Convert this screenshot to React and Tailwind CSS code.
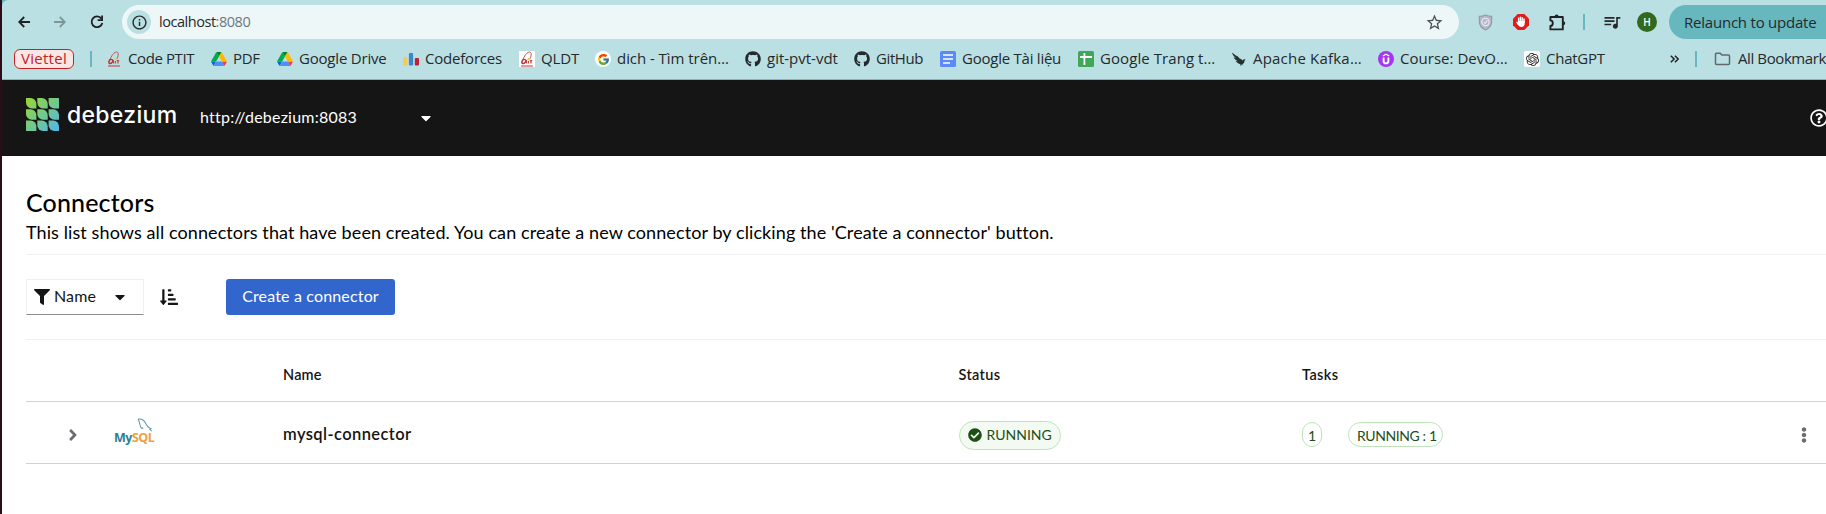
import React from "react";
import {
  FaAngleRight,
  FaCaretDown,
  FaCheckCircle,
  FaEllipsisV,
  FaFilter,
  FaGithub,
  FaRegQuestionCircle,
  FaSortAmountDownAlt,
} from "react-icons/fa";
import { FcGoogle } from "react-icons/fc";
import { MdInfoOutline, MdQueueMusic, MdStarBorder } from "react-icons/md";
import { SiOpenai } from "react-icons/si";

function ArrowIcon({ className }) {
  return (
    <svg viewBox="0 0 12 12" className={"h-3 w-3 " + className} fill="none">
      <path d="M12 6H1.4M6.2 1 1.2 6l5 5" stroke="currentColor" strokeWidth="1.8" />
    </svg>
  );
}

function ReloadIcon() {
  return (
    <svg viewBox="0 0 14 14" className="h-[14px] w-[14px]" fill="none">
      <path d="M11.4 3.6A5.4 5.4 0 1 0 12.3 8" stroke="currentColor" strokeWidth="1.8" />
      <path d="M13 .6V6H7.6V4.2h3.6V.6z" fill="currentColor" />
    </svg>
  );
}

function DriveIcon() {
  return (
    <svg viewBox="0 0 87.3 78" className="h-[14px] w-4">
      <path fill="#0066da" d="m6.6 66.85 3.85 6.65c.8 1.4 1.95 2.5 3.3 3.3l13.75-23.8h-27.5c0 1.55.4 3.1 1.2 4.5z" />
      <path fill="#00ac47" d="m43.65 25-13.75-23.8c-1.35.8-2.5 1.9-3.3 3.3l-25.4 44a9.06 9.06 0 0 0 -1.2 4.5h27.5z" />
      <path fill="#ea4335" d="m73.55 76.8c1.35-.8 2.5-1.9 3.3-3.3l1.6-2.75 7.65-13.25c.8-1.4 1.2-2.95 1.2-4.5h-27.502l5.852 11.5z" />
      <path fill="#00832d" d="m43.65 25 13.75-23.8c-1.35-.8-2.9-1.2-4.5-1.2h-18.5c-1.6 0-3.15.45-4.5 1.2z" />
      <path fill="#4f8df9" d="m59.8 53h-32.3l-13.75 23.8c1.35.8 2.9 1.2 4.5 1.2h50.8c1.6 0 3.15-.45 4.5-1.2z" />
      <path fill="#ffba00" d="m73.4 26.5-12.7-22c-.8-1.4-1.95-2.5-3.3-3.3l-13.75 23.8 16.15 28h27.45c0-1.55-.4-3.1-1.2-4.5z" />
    </svg>
  );
}

function PtitIcon() {
  return (
    <svg viewBox="0 0 16 16" className="h-4 w-4" fill="none">
      <path d="M3 12 C4 7 7 1.5 10.5 1 C13 .8 12.6 5 10.5 8.5" stroke="#c4555a" strokeWidth="1" />
      <path d="M3.2 12.5 C1.8 10.5 4 7.5 6 8.6 C8 10 5.5 13 3.2 12.5 Z" stroke="#b8343b" strokeWidth="1.3" />
      <path d="M7.4 12.6 V9 M9.4 12.6 V10 M12 12.6 V9.4 M10.8 9.6 H13.2" stroke="#c4454b" strokeWidth="1.2" />
      <circle cx="9.6" cy="8.2" r="1.2" fill="#f2cf3c" />
      <path d="M2 15 H14" stroke="#c8343a" strokeWidth="1" />
    </svg>
  );
}

function QldtIcon() {
  return (
    <span className="block h-4 w-4 bg-white">
      <PtitIcon />
    </span>
  );
}

function CodeforcesIcon() {
  return (
    <svg viewBox="0 0 16 16" className="h-4 w-4">
      <rect x="0" y="6" width="4.4" height="8.6" rx="1" fill="#f6cd52" />
      <rect x="5.9" y="2" width="4.2" height="12.6" rx="1" fill="#3b86cf" />
      <rect x="11.8" y="7" width="4.2" height="7.6" rx="1" fill="#bd2330" />
    </svg>
  );
}

function GoogleIcon() {
  return (
    <span className="flex h-4 w-4 items-center justify-center rounded-full bg-white">
      <FcGoogle size={13} />
    </span>
  );
}

function DocsIcon() {
  return (
    <svg viewBox="0 0 16 16" className="h-4 w-4">
      <rect width="16" height="16" rx="1.6" fill="#5b8af5" />
      <path d="M3 4h10M3 8h10M3 12h7" stroke="#fff" strokeWidth="1.7" />
    </svg>
  );
}

function SheetsIcon() {
  return (
    <svg viewBox="0 0 16 16" className="h-4 w-4">
      <rect width="16" height="16" rx="1.6" fill="#3fa757" />
      <path d="M2 6h12M6.4 2v12" stroke="#fff" strokeWidth="1.8" />
    </svg>
  );
}

function KafkaIcon() {
  return (
    <svg viewBox="0 0 16 16" className="h-4 w-4">
      <path
        fill="#26302f"
        d="M1 1.5 L6.2 5.6 L5.6 4.2 L9.4 8.2 L9.8 7.4 L11.4 9.4 C12.4 8 13.8 7.8 14.6 8.8 L13.4 9.8 C13.6 11.6 12.6 12.8 11.2 13.2 L12.4 14.6 L10.6 13.6 L9.6 15.2 L9.4 13.2 C7.4 12.8 5.8 11.6 4.6 9.8 L6.8 10.2 C4.8 9 3.4 7.8 2.6 6.2 L4.8 7 C2.8 5.4 1.4 3.8 1 1.5 Z"
      />
    </svg>
  );
}

function UdemyIcon() {
  return (
    <svg viewBox="0 0 16 16" className="h-4 w-4" fill="none">
      <circle cx="8" cy="8" r="8" fill="#a435f0" />
      <path d="M5.6 6.6V10a2.4 2.4 0 0 0 4.8 0V6.6" stroke="#fff" strokeWidth="1.9" />
      <path d="M4.8 5 8 3.2 11.2 5" stroke="#fff" strokeWidth="1.4" />
    </svg>
  );
}

function ChatIcon() {
  return (
    <span className="flex h-4 w-4 items-center justify-center rounded-[2px] bg-white text-[#222]">
      <SiOpenai size={13} />
    </span>
  );
}

function ShieldIcon() {
  return (
    <svg viewBox="0 0 16 18" className="h-[17px] w-[15px]" fill="none">
      <path d="M8 1 C10 2 12.4 2.4 14.6 2.4 V8 C14.6 12.5 12 15.2 8 17 C4 15.2 1.4 12.5 1.4 8 V2.4 C3.6 2.4 6 2 8 1 Z" fill="#b4b8c8" stroke="#9498a8" strokeWidth="1.2" />
      <circle cx="8" cy="8.4" r="3.9" stroke="#eceef5" strokeWidth="1.2" />
      <path d="M6 8.8 L7.6 9.8 L10 6.8" stroke="#eceef5" strokeWidth="1.1" />
    </svg>
  );
}

function AdblockIcon() {
  return (
    <svg viewBox="0 0 16 16" className="h-4 w-4">
      <path d="M4.7 0h6.6L16 4.7v6.6L11.3 16H4.7L0 11.3V4.7z" fill="#e31b1b" />
      <path
        d="M5.6 8.4V4.2M7.4 7.4V3.2M9.2 7.4V3.6M11 8.4V5"
        stroke="#fff"
        strokeWidth="1.4"
        strokeLinecap="round"
      />
      <path d="M4.9 7h6.8v2.6c0 2-1.2 3.4-3.2 3.4-1.8 0-3.6-1.4-3.6-3.4z" fill="#fff" />
      <path d="M5.4 10.6 3.9 8.4" stroke="#fff" strokeWidth="1.3" strokeLinecap="round" />
    </svg>
  );
}

function PuzzleIcon() {
  return (
    <svg viewBox="0 0 17 17" className="h-[17px] w-[17px]" fill="none">
      <path
        d="M1.4 3 H13.8 V15.4 H1.4 V12 C4.6 11.8 4.6 6.6 1.4 6.4 Z"
        stroke="#202124"
        strokeWidth="1.9"
        strokeLinejoin="round"
      />
      <path d="M5.6 2.6a2 2 0 0 1 4 0z M14.2 7.2a2 2 0 0 1 0 4z" fill="#202124" />
    </svg>
  );
}

function FolderIcon() {
  return (
    <svg viewBox="0 0 16 14" className="h-[14px] w-[17px]" fill="none">
      <path d="M1 2.2 a1 1 0 0 1 1-1 h3.8 l1.6 1.8 h6.6 a1 1 0 0 1 1 1 v7.4 a1 1 0 0 1-1 1 h-12 a1 1 0 0 1-1-1z" stroke="#62696b" strokeWidth="1.5" />
    </svg>
  );
}

function DoubleChevron() {
  return (
    <svg viewBox="0 0 11 10" className="h-[10px] w-[11px]" fill="none">
      <path d="M1 1l4 4-4 4M6 1l4 4-4 4" stroke="#202124" strokeWidth="1.8" />
    </svg>
  );
}

const leaf = "h4.6 a5.8 5.8 0 0 1 5.8 5.8 v4.6 h-4.6 a5.8 5.8 0 0 1 -5.8 -5.8 z";

function DebeziumMark() {
  const steps = [0, 11.3, 22.6];
  return (
    <svg viewBox="0 0 33 33" className="h-[33px] w-[33px]">
      <defs>
        <linearGradient id="mark" x1="0" y1="0" x2="33" y2="33" gradientUnits="userSpaceOnUse">
          <stop offset="0.1" stopColor="#91d443" />
          <stop offset="0.55" stopColor="#6fc894" />
          <stop offset="0.95" stopColor="#55b6e6" />
        </linearGradient>
      </defs>
      <g fill="url(#mark)">
        {steps.map((y) => steps.map((x) => <path key={x + "-" + y} d={"M" + x + " " + y + leaf} />))}
        <path d="M27.2 0H33v5.8h-3z M0 27.2h3l2.8 2.8v3H0z" />
      </g>
    </svg>
  );
}

function MysqlLogo() {
  return (
    <div className="flex w-10 flex-col pt-[1px]">
      <svg viewBox="0 0 18 15" className="ml-[23px] h-[14px] w-[17px]" fill="none">
        <path
          d="M1 1.2 C4.5 .4 7.5 2.4 9 5.4 C10.4 8.6 11.6 10.6 15 11.4 L13.6 12.2 L15.6 14 M1 1.2 C2.2 3 2.2 4.6 3 6.6 C3.4 8.4 3.4 10 4.6 11 C5.4 10.6 5.2 9.6 6.6 11.6"
          stroke="#5f9cb0"
          strokeWidth="1.1"
        />
      </svg>
      <div className="-mt-px flex font-['Open_Sans',sans-serif] text-[12.5px] leading-[14px] tracking-[-0.5px]">
        <span className="font-bold text-[#2f7d97]">My</span>
        <span className="font-bold text-[#f0a03c]">SQL</span>
      </div>
    </div>
  );
}

const github = () => <FaGithub size={16} color="#24292e" />;

const bookmarks = [
  { Icon: PtitIcon, label: "Code PTIT", slot: "w-[105px]", text: "tracking-[-0.41px]" },
  { Icon: DriveIcon, label: "PDF", slot: "w-[66px]", text: "tracking-[-0.37px]" },
  { Icon: DriveIcon, label: "Google Drive", slot: "w-[126px]", text: "tracking-[-0.2px]" },
  { Icon: CodeforcesIcon, label: "Codeforces", slot: "w-[116px]", text: "tracking-[-0.2px]" },
  { Icon: QldtIcon, label: "QLDT", slot: "w-[76px]", text: "tracking-[-0.1px]" },
  { Icon: GoogleIcon, label: "dich - Tìm trên…", slot: "w-[150px]", text: "tracking-[-0.05px]" },
  { Icon: github, label: "git-pvt-vdt", slot: "w-[109px]", text: "tracking-[0px]" },
  { Icon: github, label: "GitHub", slot: "w-[86px]", text: "tracking-[-0.4px]" },
  { Icon: DocsIcon, label: "Google Tài liệu", slot: "w-[138px]", text: "tracking-[-0.24px]" },
  { Icon: SheetsIcon, label: "Google Trang t…", slot: "w-[153px]", text: "tracking-[0.07px]" },
  { Icon: KafkaIcon, label: "Apache Kafka…", slot: "w-[147px]", text: "tracking-[0.2px]" },
  { Icon: UdemyIcon, label: "Course: DevO…", slot: "w-[146px]", text: "tracking-[0.03px]" },
  { Icon: ChatIcon, label: "ChatGPT", slot: "w-[146px]", text: "tracking-[-0.24px]" },
];

function Browser() {
  return (
    <div className="bg-[#66b8be]">
      <div className="h-20 rounded-tl-[6px] border-b border-[#8fb0b3] bg-[#bae0e3] pt-[5px] font-['Open_Sans',sans-serif] text-[15px] text-[#26292c]">
        <div className="flex h-[34px] items-center">
          <div className="flex w-[120px] shrink-0 items-center pl-4 text-[#202124]">
            <ArrowIcon className="" />
            <ArrowIcon className="ml-6 rotate-180 text-[#7d9799]" />
            <span className="ml-6">
              <ReloadIcon />
            </span>
          </div>
          <div className="flex h-[34px] w-[1337px] shrink-0 items-center rounded-full bg-[#eef7f8] pl-[5px] pr-[15px]">
            <span className="flex h-6 w-6 items-center justify-center rounded-full bg-[#bae0e3]">
              <MdInfoOutline size={17} />
            </span>
            <span className="ml-2 text-[14.5px] tracking-[-0.46px]">
              localhost<span className="text-[#6f7779]">:8080</span>
            </span>
            <MdStarBorder size={19} className="ml-auto text-[#4b5153]" />
          </div>
          <div className="flex shrink-0 items-center pl-[18.5px]">
            <ShieldIcon />
            <span className="ml-[20.5px]">
              <AdblockIcon />
            </span>
            <span className="ml-5">
              <PuzzleIcon />
            </span>
            <span className="ml-[17px] h-4 w-[2px] bg-[#66b8be]" />
            <MdQueueMusic size={20} className="ml-[16.5px]" />
            <span className="ml-[15.5px] flex h-5 w-5 items-center justify-center rounded-full bg-[#33691e] text-[10px] font-semibold text-white">
              H
            </span>
          </div>
          <div className="ml-[12px] flex h-[34px] flex-1 items-center overflow-hidden rounded-l-full bg-[#66b8be] pl-[15px]">
            <span className="whitespace-nowrap tracking-[-0.22px]">Relaunch to update</span>
          </div>
        </div>
        <div className="flex h-10 items-center pl-3">
          <span className="flex h-5 w-[60px] shrink-0 items-center justify-center rounded-[6px] border border-[#c5221f] bg-[#fae6e5] pb-0.5 tracking-[0.27px] text-[#c5221f]">
            Viettel
          </span>
          <span className="ml-4 h-4 w-[2px] shrink-0 bg-[#66b8be]" />
          <div className="ml-[14px] flex">
            {bookmarks.map(({ Icon, label, slot, text }) => (
              <div key={label} className={"flex h-6 shrink-0 items-center gap-1.5 whitespace-nowrap " + slot}>
                <Icon />
                <span className={"pb-0.5 " + text}>{label}</span>
              </div>
            ))}
          </div>
          <DoubleChevron />
          <span className="ml-4 h-4 w-[2px] shrink-0 bg-[#66b8be]" />
          <div className="ml-[17px] flex w-[112px] shrink-0 items-center gap-[7px] whitespace-nowrap">
            <span className="shrink-0">
              <FolderIcon />
            </span>
            <span className="pb-0.5 tracking-[-0.4px]">All Bookmarks</span>
          </div>
        </div>
      </div>
    </div>
  );
}

function Masthead() {
  return (
    <header className="flex h-[76px] items-center overflow-hidden bg-[#151515] pl-6 text-white">
      <div className="-mt-[7px]">
        <DebeziumMark />
      </div>
      <span className="-mt-[5px] ml-2 w-[133px] font-['Inter',sans-serif] text-[23px] font-medium tracking-[0.3px]">
        debezium
      </span>
      <span className="-mt-0.5 w-[219.5px] text-base tracking-[0.22px]">http://debezium:8083</span>
      <FaCaretDown size={16} className="-ml-[2px]" />
      <FaRegQuestionCircle size={18} className="-mr-[2px] ml-auto shrink-0" />
    </header>
  );
}

function Toolbar() {
  return (
    <div className="flex h-[84px] items-center pl-6">
      <button className="flex h-9 w-[118px] items-center border border-[#f0f0f0] border-b-[#8a8d90] pl-[7px] text-base text-[#151515]">
        <FaFilter size={16} />
        <span className="-mt-0.5 ml-1 w-[58px] text-left tracking-[0.1px]">Name</span>
        <FaCaretDown size={16} />
      </button>
      <FaSortAmountDownAlt size={18} className="ml-[16px] text-[#151515]" />
      <button className="ml-12 h-9 w-[169px] rounded-[3px] bg-[#3366cc] pb-0.5 text-base tracking-[0.16px] text-white">
        Create a connector
      </button>
    </div>
  );
}

function ConnectorTable() {
  return (
    <div className="ml-6 border-t border-[#f0f0f0] text-[#151515]">
      <div className="flex h-[62px] items-center border-b border-[#d2d2d2] pt-2 text-[14.5px] font-semibold tracking-[0.2px]">
        <span className="ml-[257px] w-[675.5px]">Name</span>
        <span className="w-[343.5px] tracking-[0.35px]">Status</span>
        <span className="tracking-[0.4px]">Tasks</span>
      </div>
      <div className="flex h-[62px] items-center border-b border-[#d2d2d2] pt-[5px]">
        <FaAngleRight size={18} className="ml-[38px] shrink-0 text-[#6a6e73]" />
        <div className="-mt-[9px] ml-8 w-[169px] shrink-0">
          <MysqlLogo />
        </div>
        <span className="-mt-0.5 w-[675.5px] shrink-0 text-[16.5px] font-semibold tracking-[0.4px]">
          mysql-connector
        </span>
        <div className="w-[343.5px] shrink-0">
          <span className="flex h-[29px] w-[102px] items-center rounded-full border border-[#bde5b8] bg-[#f3faf2] pl-[8px] text-sm text-[#1e4f18]">
            <FaCheckCircle size={14} />
            <span className="ml-[5px]">RUNNING</span>
          </span>
        </div>
        <div className="-mt-px flex text-sm text-[#1e4f18]">
          <span className="flex h-[25px] w-5 items-center justify-center rounded-full border border-[#bde5b8] pt-0.5">1</span>
          <span className="ml-[26px] flex h-[25px] w-[95px] items-center whitespace-nowrap rounded-full border border-[#bde5b8] pl-2 pt-0.5 tracking-[-0.4px]">
            RUNNING : 1
          </span>
        </div>
        <FaEllipsisV size={16} className="ml-auto mr-[14px] text-[#6a6e73]" />
      </div>
    </div>
  );
}

export default function App() {
  return (
    <div className="h-[514px] w-[1826px] overflow-hidden border-l-2 border-[#2c0c18] bg-white font-['Lato',sans-serif]">
      <Browser />
      <Masthead />
      <main>
        <div className="ml-6 h-[99px] border-b border-[#f0f0f0] pt-[30px] text-black">
          <h1 className="text-[25px] font-medium leading-8 tracking-[0.15px]">Connectors</h1>
          <p className="mt-px text-[18px] leading-[27px] tracking-[0.094px]">
            This list shows all connectors that have been created. You can create a new connector by clicking the 'Create a
            connector' button.
          </p>
        </div>
        <Toolbar />
        <ConnectorTable />
      </main>
    </div>
  );
}
